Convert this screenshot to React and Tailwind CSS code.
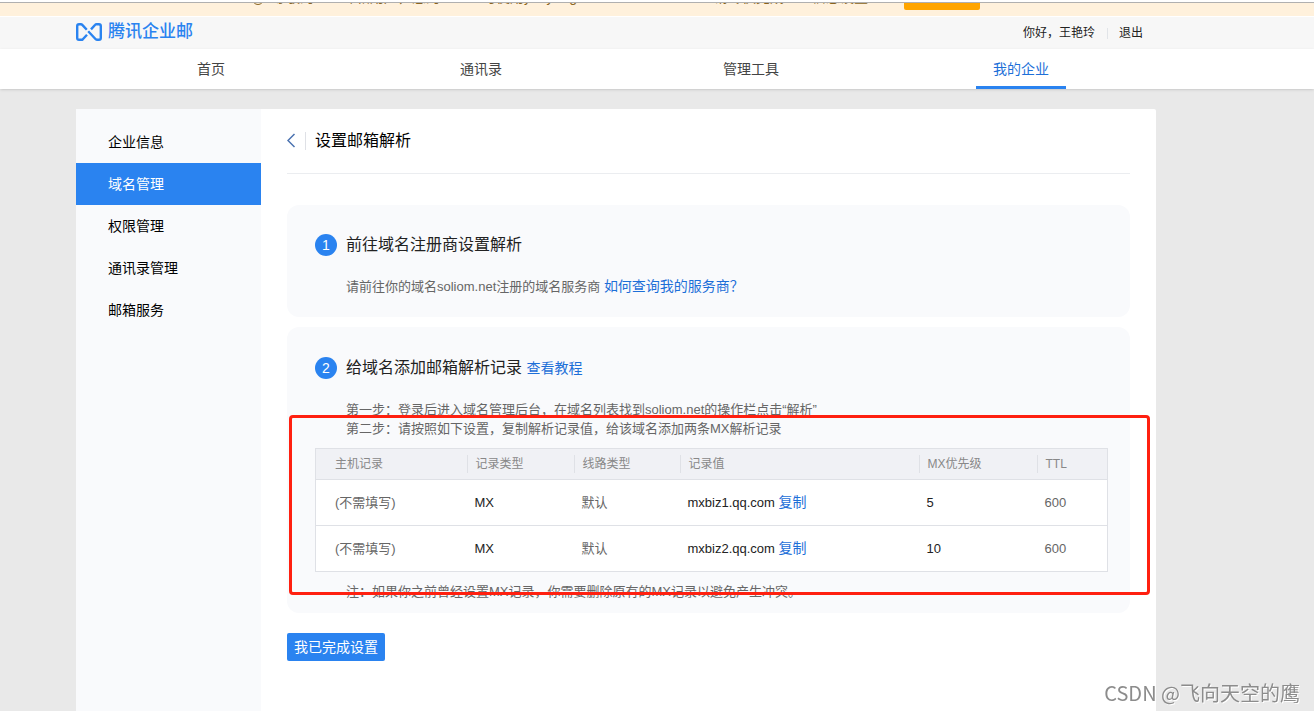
import React from 'react';

const navItems = ['首页', '通讯录', '管理工具', '我的企业'];
const sideItems = ['企业信息', '域名管理', '权限管理', '通讯录管理', '邮箱服务'];

const columns = [
    { label: '主机记录', width: 'w-[151px]' },
    { label: '记录类型', width: 'w-[107px]' },
    { label: '线路类型', width: 'w-[106px]' },
    { label: '记录值', width: 'w-[239px]' },
    { label: 'MX优先级', width: 'w-[118px]' },
    { label: 'TTL', width: '' },
];

const records = [
    { host: '(不需填写)', type: 'MX', line: '默认', value: 'mxbiz1.qq.com', priority: 5, ttl: 600 },
    { host: '(不需填写)', type: 'MX', line: '默认', value: 'mxbiz2.qq.com', priority: 10, ttl: 600 },
];

const Logo = () => (
    <svg width="26" height="18" viewBox="0 0 26 18" fill="none" stroke="#2a83f0" strokeWidth="2.4" strokeLinejoin="round">
        <path d="M11 11.8 L6.8 16.3 Q6.3 16.8 5.4 16.8 H3 Q1.2 16.8 1.2 15 V3 Q1.2 1.2 3 1.2 H4.8 Q5.7 1.2 6.3 1.9 L10.8 6.8" />
        <path d="M12.2 8.2 L19.7 16.2 Q20.3 16.8 21.2 16.8 H23 Q24.8 16.8 24.8 15 V3 Q24.8 1.2 23 1.2 H20.6 Q19.7 1.2 19.2 1.8 L15 6.4" />
    </svg>
);

const StepTitle = ({ num, children }) => (
    <div className="flex items-center h-6">
        <span className="w-[22px] h-[22px] mr-[9px] rounded-full bg-[#2a83f0] text-white text-sm font-medium flex items-center justify-center">
            {num}
        </span>
        <h2 className="text-base text-[#222]">{children}</h2>
    </div>
);

const Banner = () => (
    <div className="h-[17px] pt-[2px] bg-white">
        <div className="h-[14px] border-t border-[#b0b0b0] bg-[#fff1dc] overflow-hidden pr-[82px]">
            <div className="max-w-[1080px] mx-auto -mt-4 flex items-start text-sm leading-5 text-[#8a6420] whitespace-nowrap">
                <span className="w-3 h-3 mt-[6px] ml-44 mr-2 shrink-0 rounded-full border border-[#8a6420]"></span>
                <span className="w-[442px] shrink-0">尊敬的企业邮箱用户，您的企业已可使用yanyang</span>
                <span className="w-[190px] shrink-0">请尽快完成企业信息设置</span>
                <button className="w-[76px] h-[23px] shrink-0 rounded-xs bg-[#ffa500]" aria-label="设置"></button>
            </div>
        </div>
    </div>
);

const Header = () => (
    <header>
        <div className="bg-[#f7f7f7] pr-[82px]">
            <div className="max-w-[1080px] h-8 mx-auto pr-[13px] flex items-center justify-between">
                <a href="#home" className="h-[30px] mb-[2px] flex items-center gap-[6px] text-[17px] font-medium text-[#2a83f0]">
                    <Logo />
                    腾讯企业邮
                </a>
                <div className="flex items-center text-xs text-[#222]">
                    <span>你好，王艳玲</span>
                    <span className="w-px h-[11px] ml-3 mr-[11px] bg-[#e1e4e8]"></span>
                    <a href="#logout">退出</a>
                </div>
            </div>
        </div>
        <nav className="relative bg-white pr-[82px] shadow-sm">
            <div className="max-w-[1080px] mx-auto flex text-sm">
                {navItems.map((item) => (
                    <div key={item} className="flex-1 flex justify-center">
                        <a
                            href="#nav"
                            className={`w-[90px] h-10 pt-[3px] flex items-center justify-center border-b-3 ${item === '我的企业' ? 'border-[#2a83f0] text-[#1d6fd8]' : 'border-transparent text-[#444]'}`}
                        >
                            {item}
                        </a>
                    </div>
                ))}
            </div>
        </nav>
    </header>
);

const RecordTable = () => (
    <table className="w-full mt-[10px] table-fixed border-collapse border border-[#dfe1e6] bg-white text-[13px] text-left">
        <thead>
            <tr className="h-[31px] bg-[#f0f1f5] border-b border-[#dfe1e6]">
                {columns.map((col, i) => (
                    <th key={col.label} className={`${col.width} p-0 text-xs font-normal text-[#888]`}>
                        <div className={`h-[18px] flex items-center ${i === 0 ? 'pl-[19px]' : 'pl-2 border-l border-[#dfe1e6]'}`}>
                            {col.label}
                        </div>
                    </th>
                ))}
            </tr>
        </thead>
        <tbody>
            {records.map((r) => (
                <tr key={r.value} className="h-[46px] border-b border-[#dfe1e6] text-[#222]">
                    <td className="p-0 pl-[19px] text-[#666]">{r.host}</td>
                    <td className="p-0 pl-2">{r.type}</td>
                    <td className="p-0 pl-2 text-[#666]">{r.line}</td>
                    <td className="p-0 pl-2">
                        {r.value} <button className="text-sm text-[#1d6fd8]">复制</button>
                    </td>
                    <td className="p-0 pl-2">{r.priority}</td>
                    <td className="p-0 pl-2 text-[#666]">{r.ttl}</td>
                </tr>
            ))}
        </tbody>
    </table>
);

export default function App() {
    return (
        <div className="min-h-screen flex flex-col bg-[#e9e9e9] font-['Liberation_Sans','Noto_Sans_CJK_SC',sans-serif]">
            <Banner />
            <Header />

            <div className="flex-1 flex pt-5 pr-[82px]">
                <div className="w-full max-w-[1080px] mx-auto flex bg-white rounded-t-xs">
                    <aside className="w-[185px] shrink-0 pt-3 bg-[#f9fafc] text-sm">
                        {sideItems.map((item) => (
                            <a
                                key={item}
                                href="#side"
                                className={`h-[42px] pl-8 flex items-center ${item === '域名管理' ? 'bg-[#2a83f0] text-white' : 'text-black'}`}
                            >
                                {item}
                            </a>
                        ))}
                    </aside>

                    <main className="flex-1 min-w-0 px-[26px]">
                        <div className="h-[65px] mb-[31px] border-b border-[#ebedf0] flex items-center">
                            <button aria-label="返回" className="pr-2">
                                <svg width="10" height="16" viewBox="0 0 10 16" fill="none" stroke="#4a72b0" strokeWidth="1.5">
                                    <path d="M7.5 1 L1 7.5 L7.5 14" />
                                </svg>
                            </button>
                            <h1 className="h-[18px] pl-[9px] border-l border-[#dfe1e6] flex items-center text-base text-black">设置邮箱解析</h1>
                        </div>

                        <section className="rounded-xl bg-[#f9fafc] pt-7 pb-[21px] pl-7 pr-[22px]">
                            <StepTitle num={1}>前往域名注册商设置解析</StepTitle>
                            <p className="mt-5 pl-[31px] text-[13px] leading-[19px] text-[#666]">
                                请前往你的域名soliom.net注册的域名服务商{' '}
                                <a href="#help" className="text-sm leading-[19px] text-[#1d6fd8]">如何查询我的服务商？</a>
                            </p>
                        </section>

                        <section className="relative mt-[10px] rounded-xl bg-[#f9fafc] pt-[29px] pb-3 pl-7 pr-[22px]">
                            <StepTitle num={2}>
                                给域名添加邮箱解析记录 <a href="#guide" className="text-sm text-[#1d6fd8]">查看教程</a>
                            </StepTitle>
                            <div className="mt-5 pl-[31px] text-[13px] leading-[19px] text-[#666]">
                                <p>第一步：登录后进入域名管理后台，在域名列表找到soliom.net的操作栏点击“解析”</p>
                                <p>第二步：请按照如下设置，复制解析记录值，给该域名添加两条MX解析记录</p>
                            </div>
                            <RecordTable />
                            <p className="mt-[10px] pl-[31px] text-[13px] leading-[19px] text-[#666]">
                                注：如果你之前曾经设置MX记录，你需要删除原有的MX记录以避免产生冲突。
                            </p>
                            <div className="absolute top-[88px] bottom-[18px] left-[2px] -right-5 border-3 border-[#ff2010] rounded-sm pointer-events-none"></div>
                        </section>

                        <button className="mt-5 w-[98px] h-7 rounded-xs bg-[#2a83f0] text-sm text-white">我已完成设置</button>
                    </main>
                </div>
            </div>

            <div className="fixed right-[14px] bottom-1 text-xl text-[#8c8c8c] font-['Noto_Sans_CJK_SC',sans-serif] [text-shadow:1px_1px_0_#fff]">
                CSDN @飞向天空的鹰
            </div>
        </div>
    );
}
